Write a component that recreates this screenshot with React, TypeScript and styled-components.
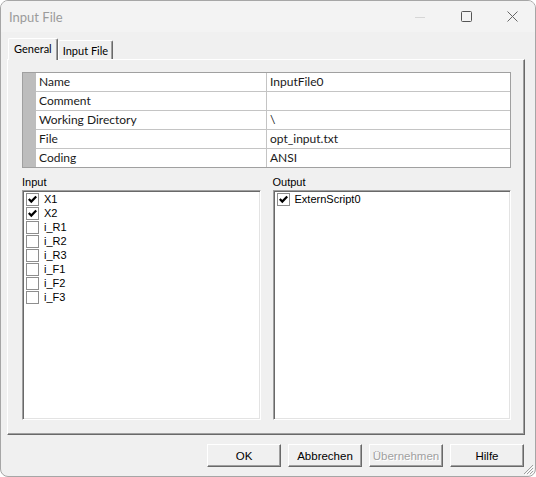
import * as React from 'react'
import styled, { createGlobalStyle } from 'styled-components'

const GlobalStyle = createGlobalStyle`
  html, body {
    margin: 0;
    padding: 0;
    background: #ffffff;
  }
  body {
    font-family: "Liberation Sans", Arial, sans-serif;
  }
`

const UI_FONT = `Lato, "Noto Sans", sans-serif`

const Window = styled.div`
  position: relative;
  width: 536px;
  height: 477px;
  box-sizing: border-box;
  border: 1px solid #a6a6a6;
  border-radius: 8px;
  background: #f0f0f0;
  display: flex;
  flex-direction: column;
  overflow: hidden;
`

const TitleBar = styled.div`
  height: 31px;
  display: flex;
  align-items: center;
  background: #f3f3f3;
`

const Title = styled.div`
  flex: 1;
  padding-left: 8px;
  font-family: ${UI_FONT};
  font-size: 13px;
  color: #9b9b9b;
`

const Controls = styled.div`
  display: flex;
  height: 100%;
`

const CtrlButton = styled.div`
  width: 46px;
  height: 100%;
  display: flex;
  align-items: center;
  justify-content: center;
`

const Body = styled.div`
  flex: 1;
  display: flex;
  flex-direction: column;
  padding: 6px 10px 0 6px;
`

const TabStrip = styled.div`
  display: flex;
  align-items: flex-end;
  height: 22px;
  padding-left: 1px;
  margin-bottom: -1px;
  position: relative;
  z-index: 1;
`

const Tab = styled.div<{ $active?: boolean }>`
  box-sizing: border-box;
  height: ${p => (p.$active ? '22px' : '19px')};
  margin-bottom: ${p => (p.$active ? '0' : '1px')};
  display: flex;
  align-items: center;
  padding: ${p => (p.$active ? '0 5px 3px 5px' : '0 4px 0 4px')};
  background: #f0f0f0;
  border-top: 1px solid #ffffff;
  border-left: 1px solid #ffffff;
  border-right: 1px solid #696969;
  box-shadow: inset -1px 0 #a0a0a0;
  border-radius: 2px 2px 0 0;
  font-family: ${UI_FONT};
  font-size: 11px;
  color: #000;
  white-space: nowrap;
`

const Panel = styled.div`
  box-sizing: border-box;
  height: 376px;
  display: flex;
  flex-direction: column;
  padding: 12px 13px 14px 14px;
  border-top: 1px solid #ffffff;
  border-left: 1px solid #ffffff;
  border-right: 1px solid #696969;
  border-bottom: 1px solid #696969;
  box-shadow: inset -1px -1px #a0a0a0;
`

const Table = styled.div`
  border: 1px solid #a0a0a0;
  background: #ffffff;
`

const Row = styled.div<{ $last?: boolean }>`
  display: grid;
  grid-template-columns: 13px 231px 1fr;
  height: ${p => (p.$last ? '18px' : '19px')};
`

const Stub = styled.div`
  background: #bdbdbd;
`

const Cell = styled.div<{ $last?: boolean; $divider?: boolean }>`
  display: flex;
  align-items: center;
  padding-left: 3px;
  padding-bottom: 2px;
  border-bottom: ${p => (p.$last ? 'none' : '1px solid #c4c4c4')};
  border-right: ${p => (p.$divider ? '1px solid #c4c4c4' : 'none')};
  font-family: ${UI_FONT};
  font-size: 12px;
  color: #1a1a1a;
  white-space: nowrap;
`

const Lists = styled.div`
  flex: 1;
  display: grid;
  grid-template-columns: 1fr 1fr;
  gap: 12px;
  margin-top: 7px;
`

const ListColumn = styled.div`
  display: flex;
  flex-direction: column;
`

const ListLabel = styled.div`
  height: 15px;
  line-height: 14px;
  font-size: 11px;
  color: #000;
`

const ListBox = styled.div`
  flex: 1;
  background: #ffffff;
  border: 1px solid;
  border-color: #a0a0a0 #ffffff #ffffff #a0a0a0;
  box-shadow: inset 1px 1px #696969, inset -1px -1px #e3e3e3;
  padding: 1px 1px 1px 3px;
`

const Item = styled.div`
  height: 14px;
  display: flex;
  align-items: center;
  font-size: 11px;
  color: #000;
`

const Box = styled.div`
  box-sizing: border-box;
  width: 13px;
  height: 13px;
  border: 1px solid #8e8e8e;
  background: #ffffff;
  margin-right: 5px;
  display: flex;
  align-items: center;
  justify-content: center;
`

const ButtonRow = styled.div`
  display: flex;
  justify-content: flex-end;
  gap: 7px;
  margin-top: 9px;
  padding-right: 1px;
`

const Button = styled.div<{ $disabled?: boolean }>`
  box-sizing: border-box;
  width: 74px;
  height: 23px;
  display: flex;
  align-items: center;
  justify-content: center;
  background: #f0f0f0;
  border-top: 1px solid #ffffff;
  border-left: 1px solid #ffffff;
  border-right: 1px solid #696969;
  border-bottom: 1px solid #696969;
  box-shadow: inset -1px -1px #a0a0a0;
  font-size: 11.5px;
  color: ${p => (p.$disabled ? '#a0a0a0' : '#000')};
  text-shadow: ${p => (p.$disabled ? '1px 1px #ffffff' : 'none')};
`

const Grip = styled.svg`
  position: absolute;
  right: 1px;
  bottom: 1px;
`

const Check: React.FC<{ checked: boolean }> = ({ checked }) => (
  <Box>
    {checked && (
      <svg width="9" height="9" viewBox="0 0 9 9">
        <polyline points="0.8,4 3.3,6.6 8.2,1.4" fill="none" stroke="#000" strokeWidth="2.2" />
      </svg>
    )}
  </Box>
)

const props = [
  ['Name', 'InputFile0'],
  ['Comment', ''],
  ['Working Directory', '\\'],
  ['File', 'opt_input.txt'],
  ['Coding', 'ANSI'],
]

const inputs: [string, boolean][] = [
  ['X1', true],
  ['X2', true],
  ['i_R1', false],
  ['i_R2', false],
  ['i_R3', false],
  ['i_F1', false],
  ['i_F2', false],
  ['i_F3', false],
]

export default function App() {
  return (
    <>
      <GlobalStyle />
      <Window>
        <TitleBar>
          <Title>Input File</Title>
          <Controls>
            <CtrlButton>
              <svg width="10" height="10" viewBox="0 0 10 10">
                <line x1="0" y1="5.5" x2="10" y2="5.5" stroke="#d6d6d6" strokeWidth="1" />
              </svg>
            </CtrlButton>
            <CtrlButton>
              <svg width="11" height="11" viewBox="0 0 11 11">
                <rect x="0.5" y="0.5" width="10" height="10" rx="1" fill="none" stroke="#555" strokeWidth="1" />
              </svg>
            </CtrlButton>
            <CtrlButton>
              <svg width="11" height="11" viewBox="0 0 11 11">
                <path d="M0.5 0.5 L10.5 10.5 M10.5 0.5 L0.5 10.5" stroke="#666" strokeWidth="1" />
              </svg>
            </CtrlButton>
          </Controls>
        </TitleBar>
        <Body>
          <TabStrip>
            <Tab $active>General</Tab>
            <Tab>Input File</Tab>
          </TabStrip>
          <Panel>
            <Table>
              {props.map(([k, v], i) => {
                const last = i === props.length - 1
                return (
                  <Row key={k} $last={last}>
                    <Stub />
                    <Cell $last={last} $divider>{k}</Cell>
                    <Cell $last={last}>{v}</Cell>
                  </Row>
                )
              })}
            </Table>
            <Lists>
              <ListColumn>
                <ListLabel>Input</ListLabel>
                <ListBox>
                  {inputs.map(([name, on]) => (
                    <Item key={name}>
                      <Check checked={on} />
                      {name}
                    </Item>
                  ))}
                </ListBox>
              </ListColumn>
              <ListColumn>
                <ListLabel>Output</ListLabel>
                <ListBox>
                  <Item>
                    <Check checked />
                    ExternScript0
                  </Item>
                </ListBox>
              </ListColumn>
            </Lists>
          </Panel>
          <ButtonRow>
            <Button>OK</Button>
            <Button>Abbrechen</Button>
            <Button $disabled>Übernehmen</Button>
            <Button>Hilfe</Button>
          </ButtonRow>
        </Body>
        <Grip width="12" height="12" viewBox="0 0 12 12">
          <path d="M11 2 L2 11 M11 5 L5 11 M11 8 L8 11" stroke="#a0a0a0" strokeWidth="1" />
          <path d="M12 3 L3 12 M12 6 L6 12 M12 9 L9 12" stroke="#ffffff" strokeWidth="1" />
        </Grip>
      </Window>
    </>
  )
}
